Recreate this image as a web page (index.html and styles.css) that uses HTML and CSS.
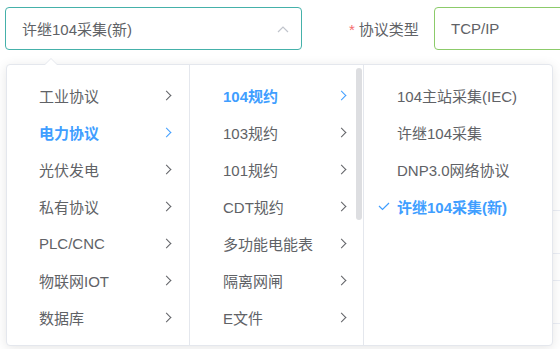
FILE: index.html
```html
<!DOCTYPE html>
<html lang="zh-CN">
<head>
    <meta charset="UTF-8">
    <meta name="viewport" content="width=device-width, initial-scale=1.0">
    <title>协议选择</title>
    <link rel="stylesheet" href="styles.css">
</head>
<body>
    <div class="form-row">
        <div class="select is-focus">
            <span class="select-value">许继104采集(新)</span>
            <svg class="select-arrow" width="12" height="8" viewBox="0 0 12 8">
                <path d="M1 7 L6 2 L11 7" fill="none" stroke="#c0c4cc" stroke-width="1.2"/>
            </svg>
        </div>
        <label class="form-label"><span class="required">*</span>协议类型</label>
        <div class="input is-success">TCP/IP</div>
    </div>

    <!-- 弹层下方的表格 -->
    <div class="table">
        <div class="table-row" style="height: 160px"></div>
        <div class="table-row" style="height: 42px"></div>
        <div class="table-row" style="height: 26px"></div>
        <div class="table-row" style="height: 42px"></div>
    </div>

    <div class="cascader-panel">
        <span class="popper-arrow"></span>
        <ul class="menu">
            <li class="menu-item">工业协议<i class="chevron"></i></li>
            <li class="menu-item active">电力协议<i class="chevron"></i></li>
            <li class="menu-item">光伏发电<i class="chevron"></i></li>
            <li class="menu-item">私有协议<i class="chevron"></i></li>
            <li class="menu-item">PLC/CNC<i class="chevron"></i></li>
            <li class="menu-item">物联网IOT<i class="chevron"></i></li>
            <li class="menu-item">数据库<i class="chevron"></i></li>
        </ul>
        <ul class="menu menu-scroll">
            <li class="menu-item active">104规约<i class="chevron"></i></li>
            <li class="menu-item">103规约<i class="chevron"></i></li>
            <li class="menu-item">101规约<i class="chevron"></i></li>
            <li class="menu-item">CDT规约<i class="chevron"></i></li>
            <li class="menu-item">多功能电能表<i class="chevron"></i></li>
            <li class="menu-item">隔离网闸<i class="chevron"></i></li>
            <li class="menu-item">E文件<i class="chevron"></i></li>
            <span class="scrollbar"></span>
        </ul>
        <ul class="menu menu-leaf">
            <li class="menu-item">104主站采集(IEC)</li>
            <li class="menu-item">许继104采集</li>
            <li class="menu-item">DNP3.0网络协议</li>
            <li class="menu-item active">
                <svg class="check" width="12" height="9" viewBox="0 0 12 9">
                    <path d="M1 4 L4.5 7.5 L11 1" fill="none" stroke="#409eff" stroke-width="1.2"/>
                </svg>
                许继104采集(新)
            </li>
        </ul>
    </div>
</body>
</html>
```

FILE: styles.css
```css
body {
    margin: 0;
    font-family: "Liberation Sans", "Noto Sans CJK SC", sans-serif;
    font-size: 15px;
    color: #606266;
    background: #fff;
    overflow: hidden;
}

.form-row {
    display: flex;
    align-items: center;
    padding: 7px 0 0 5px;
}

.form-row > * {
    flex-shrink: 0;
}

.select {
    width: 297px;
    height: 43px;
    box-sizing: border-box;
    border: 1px solid #45b1aa;
    border-radius: 4px;
    padding-left: 16px;
    display: flex;
    align-items: center;
    justify-content: space-between;
}

.select-arrow {
    margin-right: 12px;
}

.form-label {
    margin-left: 47px;
    width: 85px;
}

.required {
    color: #f56c6c;
    margin-right: 4px;
}

.input {
    width: 160px;
    height: 43px;
    box-sizing: border-box;
    border: 1px solid #8ccb6a;
    border-radius: 4px;
    padding-left: 16px;
    display: flex;
    align-items: center;
}

.table {
    margin: 0 0 0 540px;
}

.table-row {
    border-bottom: 1px solid #ebeef5;
}

.cascader-panel {
    position: absolute;
    left: 6px;
    top: 64px;
    width: 547px;
    height: 282px;
    box-sizing: border-box;
    display: flex;
    background: #fff;
    border: 1px solid #e4e7ed;
    border-radius: 4px;
    box-shadow: 0 2px 12px rgba(0, 0, 0, 0.1);
}

.popper-arrow {
    position: absolute;
    left: 38px;
    top: -7px;
    width: 0;
    height: 0;
    border: 6px solid transparent;
    border-top: 0;
    border-bottom-color: #e4e7ed;
}

.popper-arrow::after {
    content: "";
    position: absolute;
    left: -6px;
    top: 1px;
    border: 6px solid transparent;
    border-top: 0;
    border-bottom-color: #fff;
}

.menu {
    list-style: none;
    margin: 0;
    padding: 12px 0 0;
    width: 182px;
    border-right: 1px solid #e4e7ed;
    position: relative;
}

.menu-scroll {
    width: 173px;
}

.menu-leaf {
    flex: 1;
    border-right: 0;
}

.menu-item {
    height: 37px;
    display: flex;
    align-items: center;
    justify-content: space-between;
    padding: 0 16px 0 32px;
    position: relative;
}

.menu-scroll .menu-item {
    padding: 0 16px 0 33px;
}

.menu-scroll .menu-item .chevron {
    margin-right: 2px;
}

.menu-leaf .menu-item {
    padding-left: 33px;
    justify-content: flex-start;
}

.menu-item.active {
    color: #409eff;
    font-weight: bold;
}

.chevron {
    width: 6px;
    height: 6px;
    border-top: 1px solid #606266;
    border-right: 1px solid #606266;
    transform: rotate(45deg);
    margin-right: 3px;
}

.menu-item.active .chevron {
    border-color: #409eff;
}

.check {
    position: absolute;
    left: 14px;
    top: 14px;
}

.scrollbar {
    position: absolute;
    right: 1px;
    top: 3px;
    width: 6px;
    height: 152px;
    border-radius: 3px;
    background: #dddee1;
}
```
